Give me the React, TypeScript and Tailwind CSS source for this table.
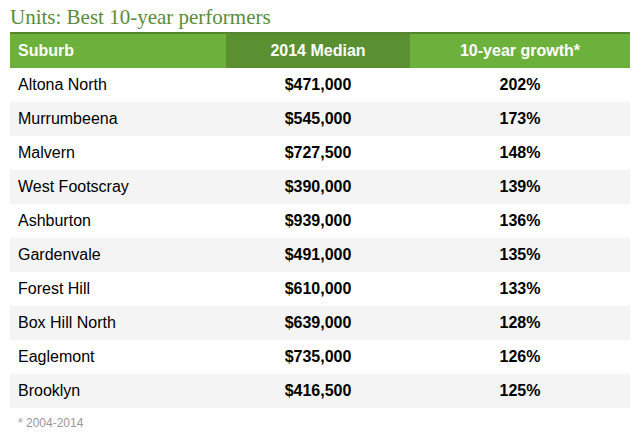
import React from "react";

const rows: [string, string, string][] = [
  ["Altona North", "$471,000", "202%"],
  ["Murrumbeena", "$545,000", "173%"],
  ["Malvern", "$727,500", "148%"],
  ["West Footscray", "$390,000", "139%"],
  ["Ashburton", "$939,000", "136%"],
  ["Gardenvale", "$491,000", "135%"],
  ["Forest Hill", "$610,000", "133%"],
  ["Box Hill North", "$639,000", "128%"],
  ["Eaglemont", "$735,000", "126%"],
  ["Brooklyn", "$416,500", "125%"],
];

export default function App() {
  return (
    <div className="w-[641px] h-[433px] bg-white px-[10px] pt-[5px] font-['Liberation_Sans',Arial,sans-serif]">
      <h1 className="font-['Liberation_Serif',serif] text-[21px] leading-[24px] text-[#5b8c3a] mb-[3px]">
        Units: Best 10-year performers
      </h1>
      <div className="w-[620px]">
        <div className="flex h-[36px] border-t-2 border-[#55862f] text-white font-bold text-[16px]">
          <div className="w-[216px] bg-[#6db13d] flex items-center pl-[8px]">Suburb</div>
          <div className="w-[184px] bg-[#5b9032] flex items-center justify-center">2014 Median</div>
          <div className="flex-1 bg-[#6db13d] flex items-center justify-center">10-year growth*</div>
        </div>
        {rows.map((r, i) => (
          <div
            key={r[0]}
            className={`flex h-[34px] items-center text-[16px] text-black ${i % 2 === 1 ? "bg-[#f4f4f4]" : "bg-white"}`}
          >
            <div className="w-[216px] pl-[8px]">{r[0]}</div>
            <div className="w-[184px] text-center font-bold">{r[1]}</div>
            <div className="flex-1 text-center font-bold">{r[2]}</div>
          </div>
        ))}
        <div className="text-[12px] text-[#999999] pt-[6px] pl-[8px]">* 2004-2014</div>
      </div>
    </div>
  );
}
